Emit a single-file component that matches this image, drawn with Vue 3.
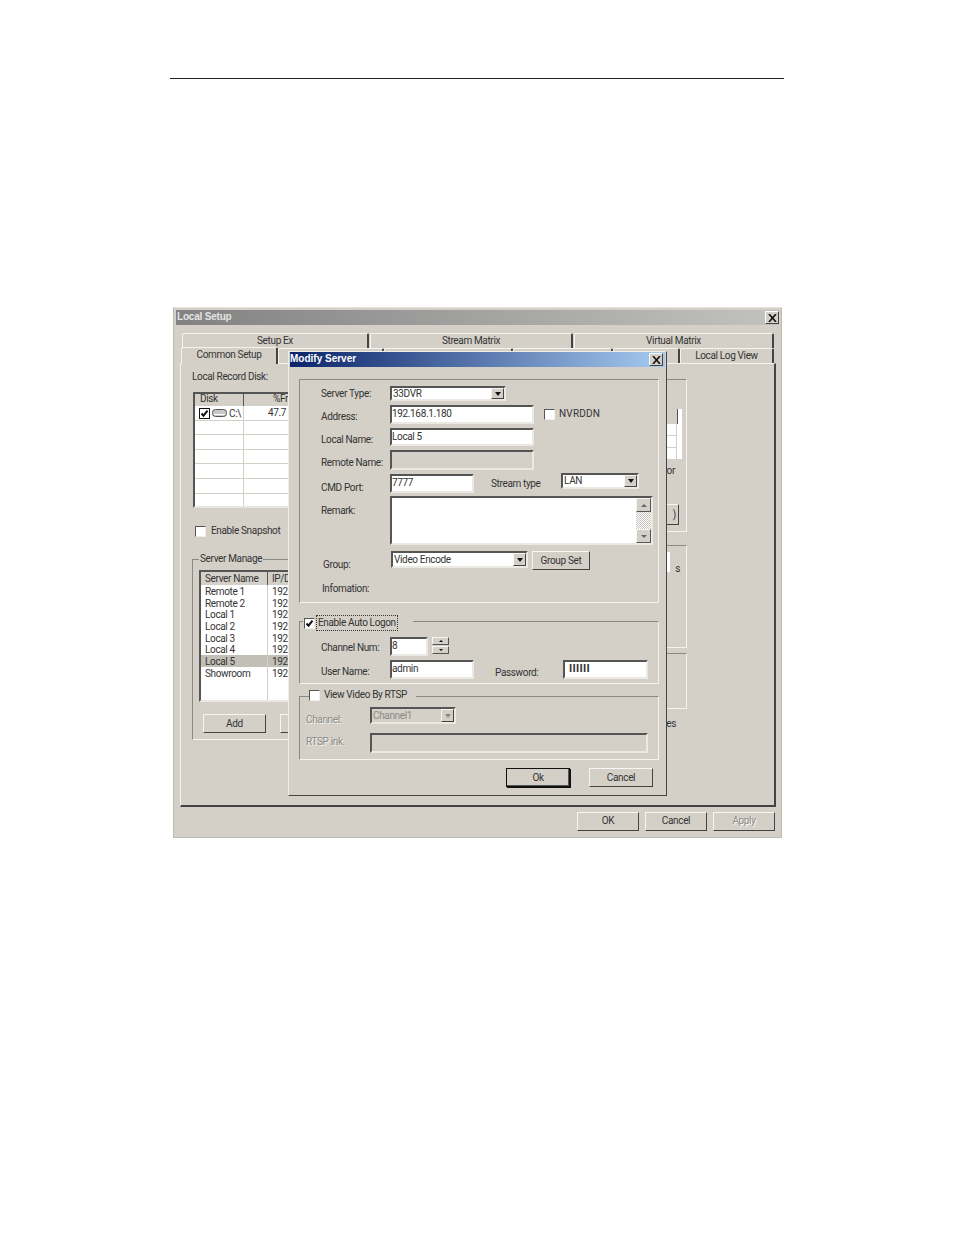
<script setup>
const topTabs = ['Setup Ex', 'Stream Matrix', 'Virtual Matrix']
const subTabs = [
  { label: 'Common Setup', cls: 'st-common' },
  { label: '', cls: 'st-a' },
  { label: '', cls: 'st-b' },
  { label: '', cls: 'st-c' },
  { label: '', cls: 'st-d' },
  { label: 'Local Log View', cls: 'st-log' }
]
const diskRows = [1, 2, 3, 4, 5, 6]
const servers = ['Remote 1', 'Remote 2', 'Local 1', 'Local 2', 'Local 3', 'Local 4', 'Local 5', 'Showroom', '', '']
</script>

<template>
  <div class="page">
    <div class="rule"></div>

    <section class="win">
      <header class="win-title">
        <span class="cap">Local Setup</span>
        <span class="close">
          <svg viewBox="0 0 9 8" width="9" height="8"><path d="M1 0l7 8M8 0L1 8" stroke="#111" stroke-width="1.6" fill="none" /></svg>
        </span>
      </header>

      <div class="tabs tabs-top">
        <div v-for="t in topTabs" :key="t" class="tab top-tab">{{ t }}</div>
      </div>
      <div class="tabs tabs-sub">
        <div v-for="t in subTabs" :key="t.cls" class="tab" :class="t.cls">{{ t.label }}</div>
      </div>

      <div class="panel">
        <div class="col-left">
          <div class="txt disk-title">Local Record Disk:</div>
          <div class="list disk-list">
            <div class="head disk-grid">
              <span class="hcell">Disk</span><span class="hcell pct">%Fr</span>
            </div>
            <div class="disk-grid disk-row first">
              <span class="disk-cell">
                <span class="chk chk-small on">
                  <svg viewBox="0 0 9 9" width="9" height="9"><path d="M1.5 4.5l2 2.2 4-5" stroke="#111" stroke-width="2" fill="none" /></svg>
                </span>
                <svg class="drive" viewBox="0 0 15 8" width="15" height="8"><rect x="0.5" y="0.5" width="14" height="7" rx="3" fill="#c8c8c8" stroke="#555" /><path d="M2 5.5h11" stroke="#fff" /></svg>
                <span>C:\</span>
              </span>
              <span class="pct-val">47.7</span>
            </div>
            <div v-for="r in diskRows" :key="r" class="disk-grid disk-row"><span></span><span></span></div>
          </div>

          <div class="check-line snap">
            <span class="chk"></span><span class="txt">Enable Snapshot</span>
          </div>

          <div class="group server-group">
            <span class="legend txt">Server Manage</span>
            <div class="list server-list">
              <div class="head server-grid">
                <span class="hcell">Server Name</span><span class="hcell">IP/D</span>
              </div>
              <div v-for="(s, i) in servers" :key="i" class="server-grid server-row" :class="{ sel: s === 'Local 5' }">
                <span>{{ s }}</span><span>{{ s ? '192' : '' }}</span>
              </div>
            </div>
            <div class="server-btns">
              <button class="btn add">Add</button>
              <button class="btn add second"></button>
            </div>
          </div>
        </div>

        <div class="col-right">
          <div class="group frag-1">
            <div class="frag-table">
              <div class="frag-head"></div>
              <div class="frag-cell"></div><div class="frag-cell"></div><div class="frag-cell"></div>
            </div>
            <div class="txt frag-or">or</div>
            <button class="btn frag-btn">)</button>
          </div>
          <div class="group frag-2"><span class="frag-white"></span><span class="txt frag-s">s</span></div>
          <div class="group frag-3"></div>
          <div class="txt frag-es">es</div>
        </div>
      </div>

      <footer class="win-foot">
        <button class="btn foot-btn">OK</button>
        <button class="btn foot-btn">Cancel</button>
        <button class="btn foot-btn disabled">Apply</button>
      </footer>
    </section>

    <section class="dlg">
      <header class="dlg-title">
        <span class="cap">Modify Server</span>
        <span class="close dlg-close">
          <svg viewBox="0 0 9 8" width="9" height="8"><path d="M1 0l7 8M8 0L1 8" stroke="#111" stroke-width="1.6" fill="none" /></svg>
        </span>
      </header>

      <div class="group g1">
        <div class="row r1">
          <label class="lbl">Server Type:</label>
          <div class="combo c-type"><span>33DVR</span><span class="arrow"><i></i></span></div>
        </div>
        <div class="row r2">
          <label class="lbl">Address:</label>
          <div class="field f-long">192.168.1.180</div>
          <div class="check-line nvr"><span class="chk"></span><span class="txt wide">NVRDDN</span></div>
        </div>
        <div class="row r3">
          <label class="lbl">Local Name:</label>
          <div class="field f-long">Local 5</div>
        </div>
        <div class="row r4">
          <label class="lbl">Remote Name:</label>
          <div class="field f-long off"></div>
        </div>
        <div class="row r5">
          <label class="lbl">CMD Port:</label>
          <div class="field f-port">7777</div>
          <span class="txt stream">Stream type</span>
          <div class="combo c-lan"><span>LAN</span><span class="arrow"><i></i></span></div>
        </div>
        <div class="row r6">
          <label class="lbl">Remark:</label>
          <div class="field f-remark">
            <div class="scroll">
              <span class="sb-btn"><i class="up"></i></span>
              <span class="sb-track"></span>
              <span class="sb-btn"><i class="down"></i></span>
            </div>
          </div>
        </div>
        <div class="row r7">
          <label class="lbl grp">Group:</label>
          <div class="combo c-group"><span>Video Encode</span><span class="arrow"><i></i></span></div>
          <button class="btn group-set">Group Set</button>
        </div>
        <div class="row r8"><label class="lbl info">Infomation:</label></div>
      </div>

      <div class="group g2">
        <div class="legend legend-auto">
          <span class="chk on">
            <svg viewBox="0 0 9 9" width="9" height="9"><path d="M1.5 4.5l2 2.2 4-5" stroke="#111" stroke-width="2" fill="none" /></svg>
          </span>
          <span class="txt focus">Enable Auto Logon</span>
        </div>
        <div class="row r-chan">
          <label class="lbl">Channel Num:</label>
          <div class="field f-chan">8</div>
          <div class="spin">
            <span class="spin-btn"><i class="up"></i></span>
            <span class="spin-btn"><i class="down"></i></span>
          </div>
        </div>
        <div class="row r-user">
          <label class="lbl">User Name:</label>
          <div class="field f-port">admin</div>
          <span class="txt pass">Password:</span>
          <div class="field f-pass"><b>IIIIII</b></div>
        </div>
      </div>

      <div class="group g3">
        <div class="legend legend-rtsp">
          <span class="chk"></span><span class="txt rtsp-title">View Video By RTSP</span>
        </div>
        <div class="row r-rc">
          <label class="lbl dim l-rc">Channel:</label>
          <div class="combo c-chan off-combo"><span>Channel1</span><span class="arrow dim-arrow"><i></i></span></div>
        </div>
        <div class="row r-rl">
          <label class="lbl dim l-rc">RTSP ink.</label>
          <div class="field f-rtsp off"></div>
        </div>
      </div>

      <footer class="dlg-foot">
        <button class="btn dlg-btn def">Ok</button>
        <button class="btn dlg-btn">Cancel</button>
      </footer>
    </section>
  </div>
</template>

<style scoped>
.page {
  position: relative;
  width: 954px;
  height: 1235px;
  overflow: hidden;
  background: #fff;
  font: 10px/12px Roboto, "Liberation Sans", Arial, sans-serif;
  letter-spacing: -0.35px;
  color: #333;
}
.rule { height: 1px; width: 614px; margin: 78px 0 0 170px; background: #222; }
.cap { font-family: "Liberation Sans", Arial, sans-serif; font-weight: 700; margin-top: -2px; letter-spacing: 0; }

/* main window */
.win {
  box-sizing: border-box;
  width: 609px;
  height: 531px;
  margin: 228px 0 0 173px;
  padding: 2px;
  background: #d4d0c8;
  border: 1px solid #bdbab3;
  border-top-color: #e6e4df;
}
.win-title {
  height: 15px;
  padding: 0 0 0 1px;
  display: flex;
  align-items: center;
  justify-content: space-between;
  background: linear-gradient(90deg, #828282, #c2c2c0);
  color: #e4e4e4;
}
.win-title .cap { letter-spacing: -0.2px; }
.close {
  width: 12px;
  height: 11px;
  display: flex;
  align-items: center;
  justify-content: center;
  background: #d4d0c8;
  border: 1px solid;
  border-color: #fff #444 #444 #fff;
}
.tabs { display: flex; }
.tabs-top { margin: 8px 0 0 6px; height: 15px; gap: 1px; }
.tabs-sub { margin: 0 0 0 5px; height: 15px; position: relative; z-index: 2; }
.tab {
  box-sizing: border-box;
  height: 100%;
  text-align: center;
  line-height: 14px;
  border-top: 1px solid #f4f3f0;
  border-left: 1px solid #f4f3f0;
  border-right: 2px solid #444;
  border-top-left-radius: 2px;
  border-top-right-radius: 2px;
}
.top-tab { flex: 0 0 187px; }
.top-tab:nth-child(2) { flex-basis: 203px; }
.top-tab:nth-child(3) { flex-basis: 200px; }
.st-common { flex: 0 0 97px; height: 17px; margin-top: -1px; background: #d4d0c8; line-height: 14px; }
.st-a { flex: 0 0 106px; }
.st-b { flex: 0 0 129px; }
.st-c { flex: 0 0 100px; }
.st-d { flex: 0 0 67px; }
.st-log { flex: 0 0 94px; line-height: 14px; }

.panel {
  box-sizing: border-box;
  width: 596px;
  height: 444px;
  margin-left: 4px;
  display: flex;
  background: #d4d0c8;
  border: 1px solid #f4f3f0;
  border-right: 2px solid #444;
  border-bottom: 2px solid #444;
}
.col-left { margin-left: 11px; width: 200px; flex: none; }
.col-right { margin: 15px 87px 0 auto; width: 280px; flex: none; }
.txt { white-space: nowrap; }
.disk-title { margin-top: 7px; }

.list {
  box-sizing: border-box;
  background: #fff;
  border: 2px solid;
  border-color: #555 #e8e6e1 #e8e6e1 #555;
}
.head { background: #d4d0c8; height: 12px; line-height: 10px; }
.hcell { box-sizing: border-box; display: block; padding-left: 5px; border-right: 1px solid #555; height: 100%; }
.disk-list { margin: 9px 0 0 1px; width: 190px; height: 116px; overflow: hidden; }
.disk-grid { display: grid; grid-template-columns: 49px 1fr; }
.disk-row { height: 14.6px; border-bottom: 1px solid #d4d0c8; box-sizing: border-box; }
.disk-row > span:first-child { border-right: 1px solid #d4d0c8; }
.pct { text-align: left; padding-left: 29px; }
.pct-val { padding-left: 24px; line-height: 14px; }
.disk-cell { display: flex; align-items: center; gap: 2px; padding-left: 4px; line-height: 13px; }
.drive { flex: none; }

.chk {
  box-sizing: border-box;
  display: inline-flex;
  align-items: center;
  justify-content: center;
  flex: none;
  width: 11px;
  height: 11px;
  background: #fff;
  border: 1px solid;
  border-color: #555 #eee #eee #555;
}
.chk-small { border-color: #111; }
.check-line { display: flex; align-items: center; gap: 5px; }
.snap { margin: 17px 0 0 3px; }

.group {
  position: relative;
  box-sizing: border-box;
  border: 1px solid;
  border-color: #8b8984 #f4f3f0 #f4f3f0 #8b8984;
}
.legend { position: absolute; background: #d4d0c8; }
.server-group { margin-top: 22px; width: 300px; height: 181px; }
.server-group .legend { left: 6px; top: -7px; padding: 0 1px; }
.server-list { margin: 10px 0 0 6px; width: 240px; height: 132px; overflow: hidden; }
.server-list .head { height: 13px; line-height: 13px; }
.server-grid { display: grid; grid-template-columns: 67px 1fr; }
.server-row { height: 11.7px; line-height: 13px; }
.server-row > span { padding-left: 4px; }
.server-grid .hcell { padding-left: 4px; }
.server-row > span:first-child { border-right: 1px solid #d4d0c8; box-sizing: border-box; }
.sel { background: #c2bfb7; }
.server-btns { display: flex; gap: 14px; margin: 12px 0 0 10px; }

.btn {
  box-sizing: border-box;
  padding: 0;
  font: inherit;
  letter-spacing: inherit;
  color: inherit;
  text-align: center;
  background: #d4d0c8;
  border: 1px solid;
  border-color: #f7f6f3 #444 #444 #f7f6f3;
}
.add { width: 63px; height: 19px; }

/* fragments of the window behind the dialog */
.frag-1 { height: 153px; }
.frag-table { margin: 29px 4px 0 auto; width: 20px; background: #fff; height: 50px; }
.frag-head { height: 15px; background: #d4d0c8; border-right: 1px solid #555; width: 15px; }
.frag-cell { height: 11px; border-bottom: 1px solid #d4d0c8; border-right: 1px solid #d4d0c8; width: 14px; }
.frag-or { position: absolute; right: 11px; top: 85px; }
.frag-btn { position: absolute; right: 7px; top: 124px; width: 40px; height: 21px; text-align: right; padding-right: 2px; }
.frag-2 { margin-top: 13px; height: 103px; }
.frag-white { position: absolute; right: 16px; top: 6px; width: 4px; height: 20px; background: #fff; }
.frag-s { position: absolute; right: 6px; top: 17px; }
.frag-3 { margin-top: 5px; height: 56px; }
.frag-es { text-align: right; margin: 9px 11px 0 0; }

.win-foot { display: flex; justify-content: flex-end; gap: 6px; margin: 5px 4px 0 0; }
.foot-btn { width: 62px; height: 19px; padding-bottom: 2px; }
.disabled { color: #8b8984; text-shadow: 1px 1px 0 #fff; }

/* modal dialog */
.dlg {
  position: absolute;
  z-index: 3;
  left: 288px;
  top: 351px;
  box-sizing: border-box;
  width: 379px;
  height: 445px;
  padding: 0 1px 1px;
  background: #d4d0c8;
  border: 1px solid;
  border-color: #eeece8 #444 #444 #eeece8;
}
.dlg-title {
  height: 15px;
  padding: 0 2px 0 0;
  display: flex;
  align-items: center;
  justify-content: space-between;
  background: linear-gradient(90deg, #0a246a, #a6caf0);
  color: #fff;
}
.dlg-close { width: 12px; height: 11px; }
.g1, .g2, .g3 { margin-left: 9px; width: 360px; }
.g1 { margin-top: 12px; height: 224px; }
.g2 { margin-top: 18px; height: 63px; }
.g3 { margin-top: 12px; height: 64px; }

.row { display: flex; align-items: flex-start; margin-left: 21px; }
.lbl { box-sizing: border-box; flex: 0 0 69px; white-space: nowrap; }
.r1 { margin-top: 6px; height: 15px; }
.r1 .lbl { padding-top: 2px; }
.r2 { margin-top: 4px; height: 19px; }
.r2 .lbl { padding-top: 6px; }
.r3 { margin-top: 4px; height: 18px; }
.r3 .lbl { padding-top: 6px; }
.r4 { margin-top: 4px; height: 20px; }
.r4 .lbl { padding-top: 7px; }
.r5 { margin-top: 4px; height: 19px; }
.r5 .lbl { padding-top: 8px; }
.r6 { margin-top: 3px; height: 49px; }
.r6 .lbl { padding-top: 9px; }
.r7 { margin-top: 6px; height: 19px; }
.r7 .lbl { padding-top: 8px; }
.r8 { margin-top: 13px; }
.grp { padding-left: 2px; flex-basis: 70px; }
.info { padding-left: 1px; }

.field {
  position: relative;
  box-sizing: border-box;
  flex: none;
  height: 100%;
  padding: 0;
  background: #fff;
  border: 2px solid;
  border-color: #555 #ece9e3 #ece9e3 #555;
  line-height: 13px;
  white-space: nowrap;
}
.off { background: #d4d0c8; }
.f-long { width: 144px; }
.f-port { width: 84px; }
.f-remark { width: 263px; }
.f-chan { width: 38px; }
.f-pass { width: 85px; margin-left: 16px; padding-left: 4px; }
.f-pass b { letter-spacing: 0.3px; font-size: 11px; }
.f-rtsp { width: 278px; }

.combo {
  box-sizing: border-box;
  flex: none;
  display: flex;
  align-items: center;
  justify-content: space-between;
  background: #fff;
  border: 2px solid;
  border-color: #555 #ece9e3 #ece9e3 #555;
  padding-left: 1px;
}
.arrow {
  box-sizing: border-box;
  width: 13px;
  height: 100%;
  display: flex;
  align-items: center;
  justify-content: center;
  background: #d4d0c8;
  border: 1px solid;
  border-color: #f7f6f3 #444 #444 #f7f6f3;
}
.arrow i {
  width: 0;
  height: 0;
  border: 3px solid transparent;
  border-top: 4px solid #111;
  border-bottom: 0;
}
.c-type { width: 116px; height: 15px; }
.c-lan { width: 78px; height: 16px; margin: -1px 0 0 8px; }
.c-group { width: 137px; height: 17px; margin-right: 4px; }
.group-set { width: 58px; height: 19px; }
.stream { margin: 4px 0 0 17px; width: 62px; }
.nvr { margin: 3px 0 0 10px; gap: 4px; }
.wide { letter-spacing: 0.2px; }

.scroll {
  position: absolute;
  top: 0;
  right: 0;
  bottom: 0;
  width: 15px;
  display: flex;
  flex-direction: column;
}
.sb-btn {
  box-sizing: border-box;
  flex: 0 0 14px;
  display: flex;
  align-items: center;
  justify-content: center;
  background: #d4d0c8;
  border: 1px solid;
  border-color: #f7f6f3 #555 #555 #f7f6f3;
}
.sb-track { flex: 1; background: repeating-conic-gradient(#fff 0 25%, #c8c5bd 0 50%) 0 0 / 2px 2px; }
.up, .down { width: 0; height: 0; border: 3px solid transparent; }
.up { border-bottom: 3px solid #666; border-top: 0; }
.down { border-top: 3px solid #666; border-bottom: 0; }

.legend-auto { box-sizing: border-box; left: 3px; top: -5px; width: 110px; display: flex; align-items: center; gap: 3px; padding-left: 1px; }
.focus { outline: 1px dotted #333; outline-offset: 1px; }
.r-chan { margin-top: 15px; height: 19px; }
.r-chan .lbl { padding-top: 5px; }
.r-user { margin-top: 4px; height: 19px; }
.r-user .lbl { padding-top: 6px; }
.pass { width: 52px; margin: 7px 0 0 21px; flex: none; }
.spin { display: flex; flex-direction: column; margin-left: 4px; gap: 1px; }
.spin-btn {
  box-sizing: border-box;
  width: 17px;
  height: 8px;
  display: flex;
  align-items: center;
  justify-content: center;
  background: #d4d0c8;
  border: 1px solid;
  border-color: #f7f6f3 #555 #555 #f7f6f3;
}
.spin-btn i { border-width: 2px; }
.spin-btn .up { border-bottom: 2px solid #111; border-top: 0; }
.spin-btn .down { border-top: 2px solid #111; border-bottom: 0; }

.legend-rtsp { box-sizing: border-box; left: 9px; top: -8px; width: 107px; display: flex; align-items: center; gap: 4px; padding-left: 0; }
.r-rc { margin: 10px 0 0 6px; height: 17px; }
.r-rc .lbl { padding-top: 7px; }
.r-rl { margin: 9px 0 0 6px; height: 20px; }
.r-rl .lbl { padding-top: 3px; }
.l-rc { flex-basis: 64px; }
.dim { color: #8b8984; text-shadow: 1px 1px 0 #f4f3f0; }
.c-chan { width: 86px; height: 17px; background: #d4d0c8; color: #8b8984; }
.dim-arrow i { border-top-color: #8b8984; }

.dlg-foot { display: flex; justify-content: flex-end; gap: 19px; margin: 8px 12px 0 0; }
.dlg-btn { width: 64px; height: 19px; }
.def { border: 1px solid #111; box-shadow: inset -1px -1px 0 #555, 1px 1px 0 #111; }
</style>
